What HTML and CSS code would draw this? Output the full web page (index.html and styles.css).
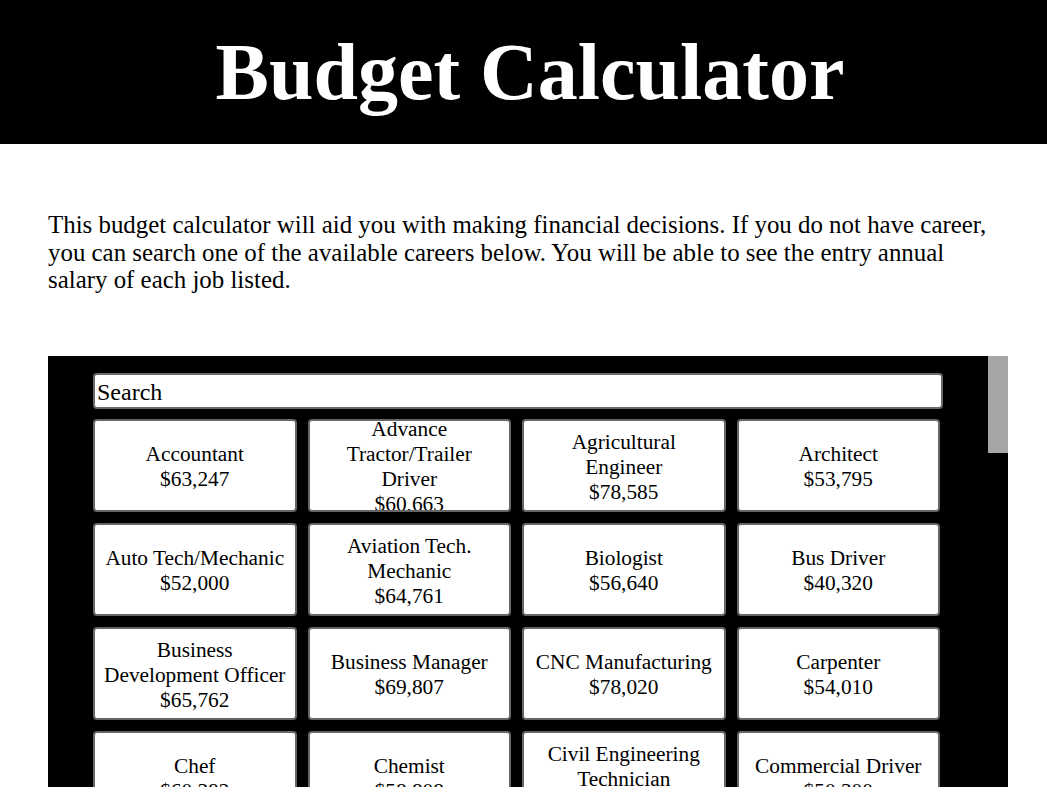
FILE: index.html
```html
<!DOCTYPE html>
<html lang="en">
<head>
<meta charset="utf-8">
<title>Budget Calculator</title>
<link rel="stylesheet" href="styles.css">
</head>
<body>
<header class="header">
  <h1 class="title">Budget Calculator</h1>
</header>
<main class="main">
  <p class="intro">This budget calculator will aid you with making financial decisions. If you do not have career, you can search one of the available careers below. You will be able to see the entry annual salary of each job listed.</p>
  <section class="panel">
    <div class="browser">
      <input class="search" type="text" placeholder="Search">
      <div class="grid">
        <div class="card"><span>Accountant</span><span>$63,247</span></div>
        <div class="card"><span>Advance Tractor/Trailer Driver</span><span>$60,663</span></div>
        <div class="card"><span>Agricultural Engineer</span><span>$78,585</span></div>
        <div class="card"><span>Architect</span><span>$53,795</span></div>
        <div class="card"><span>Auto Tech/Mechanic</span><span>$52,000</span></div>
        <div class="card"><span>Aviation Tech. Mechanic</span><span>$64,761</span></div>
        <div class="card"><span>Biologist</span><span>$56,640</span></div>
        <div class="card"><span>Bus Driver</span><span>$40,320</span></div>
        <div class="card"><span>Business Development Officer</span><span>$65,762</span></div>
        <div class="card"><span>Business Manager</span><span>$69,807</span></div>
        <div class="card"><span>CNC Manufacturing</span><span>$78,020</span></div>
        <div class="card"><span>Carpenter</span><span>$54,010</span></div>
        <div class="card"><span>Chef</span><span>$60,382</span></div>
        <div class="card"><span>Chemist</span><span>$58,808</span></div>
        <div class="card"><span>Civil Engineering Technician</span><span>$55,310</span></div>
        <div class="card"><span>Commercial Driver</span><span>$50,300</span></div>
        <div class="card"><span>Computer Programmer</span><span>$66,180</span></div>
        <div class="card"><span>Construction Manager</span><span>$72,450</span></div>
        <div class="card"><span>Cosmetologist</span><span>$31,200</span></div>
        <div class="card"><span>Customer Service Rep.</span><span>$35,880</span></div>
        <div class="card"><span>Dental Assistant</span><span>$38,660</span></div>
        <div class="card"><span>Dental Hygienist</span><span>$71,950</span></div>
        <div class="card"><span>Dentist</span><span>$128,610</span></div>
        <div class="card"><span>Diesel Mechanic</span><span>$49,870</span></div>
        <div class="card"><span>Electrical Engineer</span><span>$76,420</span></div>
        <div class="card"><span>Electrician</span><span>$54,620</span></div>
        <div class="card"><span>Elementary Teacher</span><span>$42,830</span></div>
        <div class="card"><span>EMT/Paramedic</span><span>$36,650</span></div>
        <div class="card"><span>Environmental Scientist</span><span>$58,470</span></div>
        <div class="card"><span>Financial Analyst</span><span>$64,360</span></div>
        <div class="card"><span>Firefighter</span><span>$47,290</span></div>
        <div class="card"><span>Graphic Designer</span><span>$43,210</span></div>
        <div class="card"><span>HVAC Technician</span><span>$48,730</span></div>
        <div class="card"><span>Heavy Equipment Operator</span><span>$51,480</span></div>
        <div class="card"><span>Human Resources Specialist</span><span>$52,990</span></div>
        <div class="card"><span>IT Support Specialist</span><span>$50,240</span></div>
        <div class="card"><span>Insurance Agent</span><span>$45,120</span></div>
        <div class="card"><span>Interior Designer</span><span>$46,900</span></div>
        <div class="card"><span>Journalist</span><span>$39,370</span></div>
        <div class="card"><span>Lab Technician</span><span>$44,560</span></div>
        <div class="card"><span>Lawyer</span><span>$86,330</span></div>
        <div class="card"><span>Librarian</span><span>$49,610</span></div>
        <div class="card"><span>Machinist</span><span>$46,380</span></div>
        <div class="card"><span>Marketing Manager</span><span>$71,230</span></div>
        <div class="card"><span>Mechanical Engineer</span><span>$72,840</span></div>
        <div class="card"><span>Medical Assistant</span><span>$34,200</span></div>
        <div class="card"><span>Nurse Practitioner</span><span>$98,740</span></div>
        <div class="card"><span>Occupational Therapist</span><span>$74,510</span></div>
        <div class="card"><span>Pharmacist</span><span>$112,690</span></div>
        <div class="card"><span>Pharmacy Technician</span><span>$33,950</span></div>
        <div class="card"><span>Photographer</span><span>$34,870</span></div>
        <div class="card"><span>Physical Therapist</span><span>$77,120</span></div>
        <div class="card"><span>Physician</span><span>$186,400</span></div>
        <div class="card"><span>Pilot</span><span>$82,560</span></div>
        <div class="card"><span>Plumber</span><span>$53,240</span></div>
        <div class="card"><span>Police Officer</span><span>$55,770</span></div>
        <div class="card"><span>Radiologic Technologist</span><span>$57,690</span></div>
        <div class="card"><span>Real Estate Agent</span><span>$44,890</span></div>
        <div class="card"><span>Registered Nurse</span><span>$64,370</span></div>
        <div class="card"><span>Respiratory Therapist</span><span>$58,420</span></div>
        <div class="card"><span>Sales Representative</span><span>$47,650</span></div>
        <div class="card"><span>Social Worker</span><span>$41,980</span></div>
        <div class="card"><span>Software Developer</span><span>$82,190</span></div>
        <div class="card"><span>Surveyor</span><span>$52,740</span></div>
        <div class="card"><span>Teacher</span><span>$43,870</span></div>
        <div class="card"><span>Truck Driver</span><span>$48,310</span></div>
        <div class="card"><span>Veterinarian</span><span>$89,520</span></div>
        <div class="card"><span>Veterinary Technician</span><span>$33,400</span></div>
        <div class="card"><span>Web Developer</span><span>$59,830</span></div>
        <div class="card"><span>Welder</span><span>$44,150</span></div>
        <div class="card"><span>Wind Turbine Technician</span><span>$51,260</span></div>
        <div class="card"><span>Zoologist</span><span>$55,940</span></div>
      </div>
    </div>
    <div class="rail" aria-hidden="true"><div class="thumb"></div></div>
  </section>
</main>
</body>
</html>
```
FILE: styles.css
```css
html, body {
  height: 100%;
  margin: 0;
}

body {
  display: flex;
  flex-direction: column;
  font-family: "Liberation Serif", "Times New Roman", serif;
  color: #000;
  background: #fff;
}

.header {
  flex-shrink: 0;
  height: 144px;
  padding-left: 13px;
  background: #000;
  display: flex;
  align-items: center;
  justify-content: center;
}

.title {
  margin: 0;
  color: #fff;
  font-size: 80px;
  font-weight: bold;
  line-height: 1;
}

.main {
  flex: 1;
  min-height: 0;
  display: flex;
  flex-direction: column;
  padding: 0 39px 19px 48px;
}

.intro {
  flex-shrink: 0;
  margin: 67px 9px 62px 0;
  font-size: 24.9px;
  line-height: 27.5px;
}

.panel {
  flex: 1;
  min-height: 0;
  display: flex;
  background: #000;
}

.browser {
  flex: 1;
  min-width: 0;
  overflow-y: auto;
  scrollbar-width: none;
  padding: 17px 48px 17px 45px;
}

.rail {
  flex-shrink: 0;
  width: 20px;
  background: #000;
}

.thumb {
  height: 97px;
  background: #a6a6a6;
}

.search {
  display: block;
  box-sizing: border-box;
  width: 850px;
  height: 36px;
  margin: 0;
  padding: 3px 2px 0;
  border: 2px solid #6a6a6a;
  border-radius: 4px;
  background: #fff;
  color: #000;
  font-family: "Liberation Serif", "Times New Roman", serif;
  font-size: 24px;
  outline: none;
}

.search::placeholder {
  color: #000;
  opacity: 1;
}

.grid {
  display: grid;
  grid-template-columns: repeat(4, 1fr);
  gap: 11px;
  width: 847px;
  margin-top: 10px;
}

.card {
  box-sizing: border-box;
  height: 93px;
  padding: 4px 7px 0;
  background: #fff;
  border: 2px solid #666;
  border-radius: 4px;
  display: flex;
  flex-direction: column;
  justify-content: center;
  align-items: center;
  text-align: center;
  overflow: hidden;
  font-size: 21.33px;
  line-height: 25px;
}
```
